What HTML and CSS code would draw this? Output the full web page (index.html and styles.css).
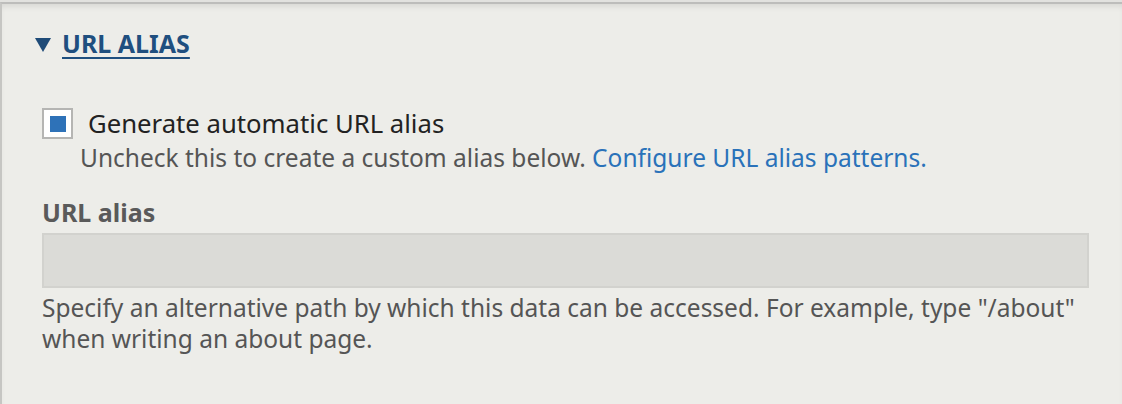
FILE: index.html
```html
<!DOCTYPE html>
<html>
<head>
<meta charset="utf-8">
<link rel="stylesheet" href="styles.css">
</head>
<body>
<div class="panel">
  <div class="summary">
    <span class="tri"></span>
    <a class="summary-link" href="#">URL alias</a>
  </div>
  <div class="content">
    <div class="check-item">
      <div class="check-row">
        <span class="checkbox"><span class="checkmark"></span></span>
        <span class="check-label">Generate automatic URL alias</span>
      </div>
      <div class="check-desc">Uncheck this to create a custom alias below. <a class="link" href="#">Configure URL alias patterns.</a></div>
    </div>
    <div class="field">
      <div class="field-label">URL alias</div>
      <div class="input"></div>
      <div class="field-desc">Specify an alternative path by which this data can be accessed. For example, type "/about" when writing an about page.</div>
    </div>
  </div>
</div>
</body>
</html>
```
FILE: styles.css
```css
html, body {
  margin: 0;
  padding: 0;
}
body {
  background: #e2e2df;
  font-family: "Noto Sans", "Open Sans", sans-serif;
  width: 1122px;
  height: 404px;
  overflow: hidden;
}
.panel {
  margin-top: 2px;
  height: 402px;
  box-sizing: border-box;
  background: #edede9;
  border-top: 2px solid #bdbdbb;
  border-left: 2px solid #c6c6c3;
  box-shadow: inset 0 5px 6px -3px rgba(0,0,0,0.10);
}
.summary {
  display: flex;
  align-items: center;
  padding: 24px 0 0 33px;
  height: 30px;
}
.tri {
  width: 0;
  height: 0;
  border-left: 8.5px solid transparent;
  border-right: 8.5px solid transparent;
  border-top: 14px solid #1f4b78;
  margin-right: 11px;
  margin-top: 4px;
}
.summary-link {
  color: #1f4f7f;
  font-weight: 700;
  font-size: 25px;
  line-height: 30px;
  text-transform: uppercase;
  text-decoration: underline;
  text-decoration-thickness: 2px;
  text-underline-offset: 4px;
}
.content {
  padding: 50px 33px 0 40px;
}
.check-row {
  display: flex;
  align-items: center;
  height: 31px;
}
.checkbox {
  width: 31px;
  height: 31px;
  box-sizing: border-box;
  border: 2px solid #b5b5b3;
  background: #fff;
  display: flex;
  align-items: center;
  justify-content: center;
}
.checkmark {
  width: 16px;
  height: 16px;
  background: #2e72b8;
}
.check-label {
  margin-left: 15px;
  font-size: 25.7px;
  line-height: 31px;
  color: #222;
}
.check-desc {
  margin-left: 38px;
  margin-top: 3px;
  font-size: 24.5px;
  line-height: 31px;
  color: #555;
  white-space: nowrap;
}
.link {
  color: #2a72b9;
  text-decoration: none;
}
.field {
  margin-top: 24px;
}
.field-label {
  font-weight: 700;
  font-size: 25px;
  line-height: 30px;
  color: #5a5a5a;
}
.input {
  margin-top: 6px;
  height: 55px;
  box-sizing: border-box;
  background: #dbdbd7;
  border: 2px solid #d2d2ce;
}
.field-desc {
  margin-top: 4px;
  font-size: 24.5px;
  line-height: 31px;
  color: #555;
}
```
